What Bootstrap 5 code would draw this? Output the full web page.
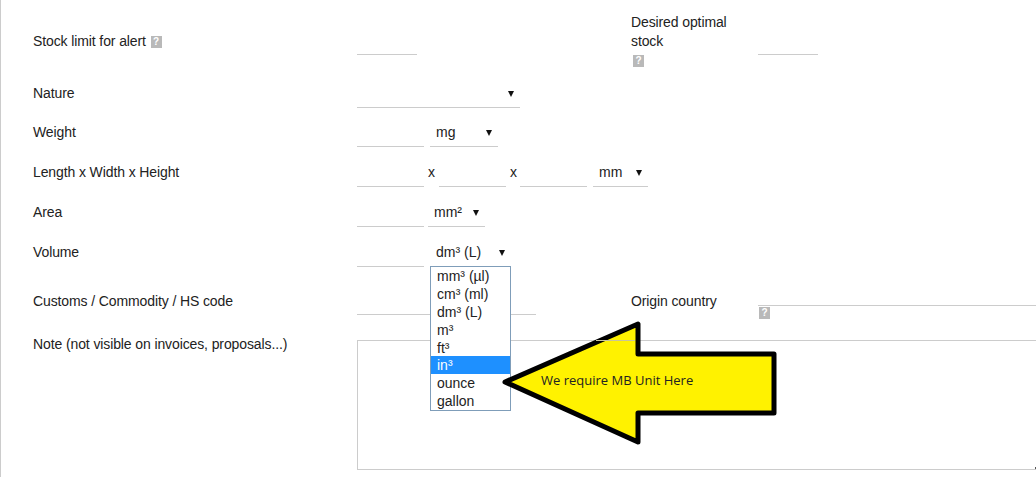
<!DOCTYPE html>
<html lang="en">
<head>
    <meta charset="UTF-8">
    <title>Product card</title>
    <link href="https://cdn.jsdelivr.net/npm/bootstrap@5.3.2/dist/css/bootstrap.min.css" rel="stylesheet">
    <style>
        html, body {
            height: 477px;
            overflow: hidden;
        }

        body {
            font-family: "Liberation Sans", Arial, sans-serif;
            font-size: 14px;
            color: #222;
            background: #fff;
            border-left: 1px solid #ccc;
        }

        .sheet {
            position: relative;
            height: 477px;
            padding: 12px 0 0 32px;
        }

        .frow {
            height: 40px;
            padding-top: 5px;
        }

        .frow-stock { height: 61px; padding-top: 0; }
        .frow-nature { height: 39px; }
        .frow-volume { height: 48px; }
        .frow-customs { height: 44px; }

        .flabel {
            width: 324px;
            flex-shrink: 0;
            line-height: 30px;
            letter-spacing: -0.11px;
        }

        .frow-stock .flabel { line-height: 20px; margin-top: 19px; }
        .frow-customs .flabel { margin-top: 1px; }

        .flabel-right {
            width: 127px;
            flex-shrink: 0;
            line-height: 30px;
            letter-spacing: -0.11px;
        }

        .frow-stock .flabel-right { line-height: 19px; margin-top: 1px; }
        .frow-customs .flabel-right { margin-top: 1px; }

        .desired { width: 100px; }

        .help-ico {
            display: inline-block;
            width: 11px;
            height: 12px;
            background: #b9b9b9;
            color: #fff;
            font-size: 10px;
            font-weight: bold;
            line-height: 12px;
            text-align: center;
            letter-spacing: 0;
            vertical-align: 1px;
            margin-left: 1px;
        }

        .frow-stock .flabel-right .help-ico { display: block; margin: 4px 0 0 2px; }

        .line-input, .line-select {
            height: 30px;
            min-height: 0;
            padding: 0;
            font-size: 14px;
            color: #222;
            border: 0;
            border-bottom: 1px solid #ccc;
            border-radius: 0;
            flex-shrink: 0;
        }

        .line-select {
            padding: 2px 0 0 6px;
            background-position: right 6px top 13px;
            background-size: 6px 6px;
            background-image: url("data:image/svg+xml,%3csvg xmlns='http://www.w3.org/2000/svg' viewBox='0 0 6 6'%3e%3cpath fill='%23111' d='M0 0h6L3 6z'/%3e%3c/svg%3e");
        }

        .w-stock { width: 60px; }
        .w-num { width: 67px; }
        .w-customs { width: 179px; }
        .w-nature { width: 163px; }
        .w-weight { width: 68px; }
        .w-dim { width: 55px; }
        .w-area { width: 57px; }
        .w-volume { width: 81px; }

        .input-cell { width: 274px; flex-shrink: 0; }
        .frow-stock .line-input { margin-top: 13px; }
        .gap-six { margin-left: 6px; }

        .times { width: 15px; padding-left: 4px; line-height: 30px; flex-shrink: 0; }
        .times-b { width: 14px; }

        .country-line {
            height: 21px;
            border-bottom: 1px solid #ccc;
            width: 278px;
        }

        .country-col .help-ico { margin: 1px 0 0 1px; display: block; }

        .note-box {
            width: 700px;
            height: 130px;
            margin-top: 11px;
            padding: 0;
            border: 1px solid #ccc;
            border-radius: 0;
            flex-shrink: 0;
        }

        .select-open { position: relative; }

        .unit-list {
            position: absolute;
            top: 29px;
            left: 0;
            width: 81px;
            z-index: 2;
            background: #fff;
            border: 1px solid #7f9db9;
            border-radius: 0;
        }

        .unit-list .list-group-item {
            border: 0;
            border-radius: 0;
            padding: 0 0 0 6px;
            height: 18px;
            line-height: 18px;
            font-size: 14px;
            color: #222;
            background: transparent;
        }

        .unit-list .list-group-item.active {
            background: #1e90ff;
            color: #fff;
        }

        .arrow-note {
            position: absolute;
            left: 500px;
            top: 318px;
            z-index: 3;
            width: 278px;
            height: 130px;
        }

        .arrow-note svg { display: block; }

        .arrow-text {
            position: absolute;
            left: 40px;
            top: 53px;
            font-family: "Open Sans", sans-serif;
            font-size: 13px;
            line-height: 18px;
            white-space: nowrap;
            color: #222;
        }

        .grip-dot {
            position: absolute;
            left: 1034px;
            top: 467px;
            width: 1px;
            height: 2px;
            background: #555;
        }
    </style>
</head>
<body>
    <div class="sheet">
        <div class="frow frow-stock d-flex align-items-start">
            <div class="flabel">Stock limit for alert <span class="help-ico">?</span></div>
            <div class="input-cell"><input class="form-control line-input w-stock" type="text"></div>
            <div class="flabel-right"><div class="desired">Desired optimal stock</div><span class="help-ico">?</span></div>
            <input class="form-control line-input w-stock" type="text">
        </div>

        <div class="frow frow-nature d-flex align-items-start">
            <div class="flabel">Nature</div>
            <select class="form-select line-select w-nature"><option></option></select>
        </div>

        <div class="frow d-flex align-items-start">
            <div class="flabel">Weight</div>
            <input class="form-control line-input w-num" type="text">
            <select class="form-select line-select w-weight gap-six"><option>mg</option></select>
        </div>

        <div class="frow d-flex align-items-start">
            <div class="flabel">Length x Width x Height</div>
            <input class="form-control line-input w-num" type="text">
            <span class="times">x</span>
            <input class="form-control line-input w-num" type="text">
            <span class="times times-b">x</span>
            <input class="form-control line-input w-num" type="text">
            <select class="form-select line-select w-dim gap-six"><option>mm</option></select>
        </div>

        <div class="frow d-flex align-items-start">
            <div class="flabel">Area</div>
            <input class="form-control line-input w-num" type="text">
            <select class="form-select line-select w-area ms-1"><option>mm²</option></select>
        </div>

        <div class="frow frow-volume d-flex align-items-start">
            <div class="flabel">Volume</div>
            <input class="form-control line-input w-num" type="text">
            <div class="select-open gap-six">
                <select class="form-select line-select w-volume"><option>dm³ (L)</option></select>
                <ul class="list-group unit-list">
                    <li class="list-group-item">mm³ (µl)</li>
                    <li class="list-group-item">cm³ (ml)</li>
                    <li class="list-group-item">dm³ (L)</li>
                    <li class="list-group-item">m³</li>
                    <li class="list-group-item">ft³</li>
                    <li class="list-group-item active">in³</li>
                    <li class="list-group-item">ounce</li>
                    <li class="list-group-item">gallon</li>
                </ul>
            </div>
        </div>

        <div class="frow frow-customs d-flex align-items-start">
            <div class="flabel">Customs / Commodity / HS code</div>
            <div class="input-cell"><input class="form-control line-input w-customs" type="text"></div>
            <div class="flabel-right">Origin country</div>
            <div class="country-col">
                <div class="country-line"></div>
                <span class="help-ico">?</span>
            </div>
        </div>

        <div class="frow d-flex align-items-start">
            <div class="flabel">Note (not visible on invoices, proposals...)</div>
            <textarea class="form-control note-box"></textarea>
        </div>

        <span class="grip-dot"></span>

        <div class="arrow-note">
            <svg width="278" height="130" viewBox="0 0 278 130">
                <path d="M4 64 L137 6 V36 H273 V95 H137 V124 Z" fill="#fff200" stroke="#000" stroke-width="5" stroke-linejoin="round"/>
                <path d="M95 22.5 H134" stroke="#c9c59a" stroke-width="1"/>
            </svg>
            <span class="arrow-text">We require MB Unit Here</span>
        </div>
    </div>
</body>
</html>
